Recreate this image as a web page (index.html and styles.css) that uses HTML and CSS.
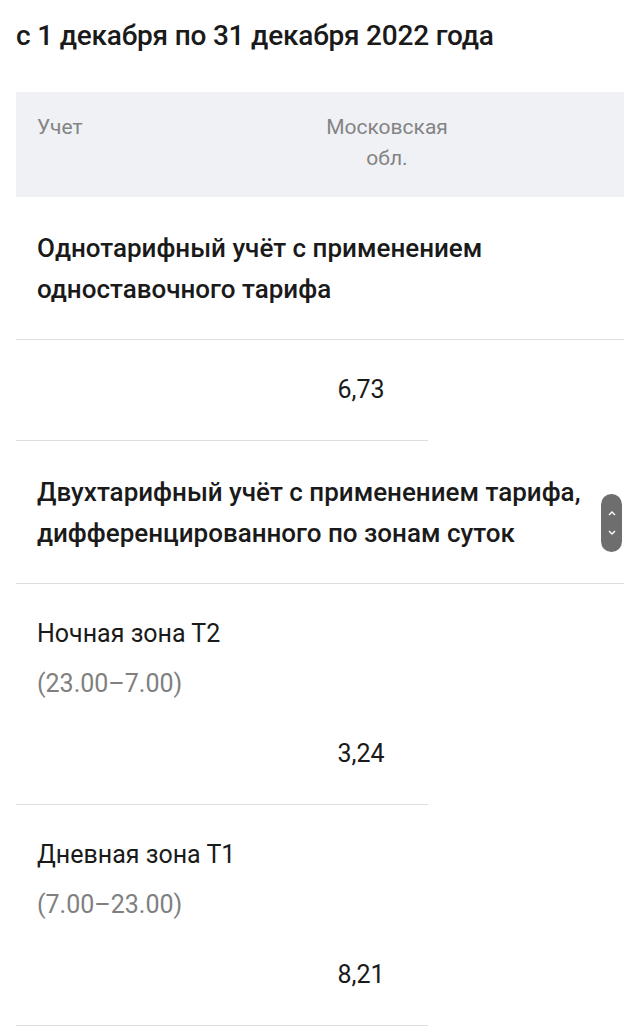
FILE: index.html
```html
<!DOCTYPE html>
<html lang="ru">

<head>
    <meta charset="UTF-8">
    <title>Тарифы на электроэнергию</title>
    <link rel="stylesheet" href="styles.css">
</head>

<body>

    <h2 class="period">с 1 декабря по 31 декабря 2022 года</h2>

    <div class="tariffs">
        <div class="thead">
            <div class="th th-name">Учет</div>
            <div class="th th-region">Московская<br>обл.</div>
        </div>

        <div class="group">Однотарифный учёт с применением одноставочного тарифа</div>
        <div class="sub">
            <div class="value">6,73</div>
        </div>

        <div class="group">Двухтарифный учёт с применением тарифа, дифференцированного по зонам суток</div>
        <div class="sub">
            <div class="zone">
                <div class="zone-name">Ночная зона Т2</div>
                <div class="zone-time">(23.00–7.00)</div>
            </div>
            <div class="value">3,24</div>
        </div>
        <div class="sub">
            <div class="zone">
                <div class="zone-name">Дневная зона Т1</div>
                <div class="zone-time">(7.00–23.00)</div>
            </div>
            <div class="value">8,21</div>
        </div>
    </div>

    <!-- плавающий скроллер -->
    <div class="scroller">
        <svg width="10" height="8" viewBox="0 0 10 8"><path d="M2 6 L5 3 L8 6" fill="none" stroke="#fff" stroke-width="1.4"/></svg>
        <svg width="10" height="8" viewBox="0 0 10 8"><path d="M2 2 L5 5 L8 2" fill="none" stroke="#fff" stroke-width="1.4"/></svg>
    </div>

</body>

</html>
```

FILE: styles.css
```css
body,
html {
    margin: 0;
    background: #ffffff;
    font-family: Roboto, "Noto Sans", sans-serif;
    color: #1a1a1a;
}

body {
    padding: 0 16px;
    position: relative;
}

.period {
    margin: 0;
    padding-top: 18px;
    font-size: 28px;
    line-height: 36px;
    font-weight: 500;
    letter-spacing: -0.2px;
}

.tariffs {
    margin-top: 38px;
}

.thead {
    display: flex;
    background-color: #f0f1f5;
    height: 105px;
    padding: 20px 0 0 21px;
    box-sizing: border-box;
    color: #848484;
    font-size: 21px;
    line-height: 31px;
}

.th-name {
    width: 220px;
}

.th-region {
    width: 260px;
    text-align: center;
}

.group {
    padding: 31px 24px 29px 21px;
    font-size: 26px;
    line-height: 41px;
    font-weight: 500;
    border-bottom: 1px solid #dcdee2;
}

.sub {
    width: 412px;
    border-bottom: 1px solid #dcdee2;
    font-size: 25px;
    line-height: 40px;
}

.zone {
    padding: 30px 0 0 21px;
}

.zone-time {
    margin-top: 10px;
    color: #808080;
}

.value {
    padding: 30px 0;
    margin-left: 278px;
    width: 134px;
    text-align: center;
}

.scroller {
    position: absolute;
    top: 494px;
    left: 601px;
    width: 21px;
    height: 58px;
    border-radius: 11px;
    background-color: #6e6e6e;
    display: flex;
    flex-direction: column;
    align-items: center;
    justify-content: center;
    gap: 12px;
}
```
